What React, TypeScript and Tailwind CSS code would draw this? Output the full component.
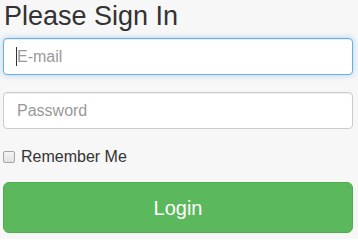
import React, { useState } from 'react';

const App: React.FC = () => {
  const [email, setEmail] = useState('');
  const [password, setPassword] = useState('');
  const [remember, setRemember] = useState(false);

  return (
    <div className="min-h-[239px] w-[358px] bg-[#f7f7f7] font-['Liberation_Sans',Arial,sans-serif] text-[#333]">
      <form className="flex flex-col px-[3px]" onSubmit={(e) => e.preventDefault()}>
        <h3 className="mt-px ml-px text-[27px] leading-[30px] text-[#333]">Please Sign In</h3>

        {/* E-mail (focused) */}
        <div className="relative mt-[7px] w-[350px]">
          <input
            type="email"
            value={email}
            onChange={(e) => setEmail(e.target.value)}
            placeholder="E-mail"
            className="block h-[37px] w-full rounded-[4px] border border-[#66afe9] bg-white pl-[13px] pr-3 text-[16px] text-[#555] placeholder:text-[#999] outline-none shadow-[inset_0_1px_1px_rgba(0,0,0,0.075),0_0_6px_rgba(102,175,233,0.5)]"
          />
          <span className="pointer-events-none absolute left-[13px] top-[9px] h-[19px] w-px bg-[#333]" />
        </div>

        <input
          type="password"
          value={password}
          onChange={(e) => setPassword(e.target.value)}
          placeholder="Password"
          className="mt-[17px] block h-[37px] w-[350px] rounded-[4px] border border-[#ccc] bg-white pl-[13px] pr-3 text-[16px] text-[#555] placeholder:text-[#999] outline-none shadow-[inset_0_1px_1px_rgba(0,0,0,0.075)]"
        />

        <label className="mt-[21px] flex items-center gap-[6px] text-[16px] leading-[13px] text-[#333]">
          <input
            type="checkbox"
            checked={remember}
            onChange={(e) => setRemember(e.target.checked)}
            className="m-0 h-[12px] w-[12px] appearance-none rounded-[2px] border border-[#a6a6a6] bg-gradient-to-b from-[#f4f4f4] to-[#e2e2e2] checked:bg-[#0075ff]"
          />
          Remember Me
        </label>

        <button
          type="submit"
          className="mt-[19px] h-[51px] w-[350px] rounded-[6px] border border-[#4cae4c] bg-[#5cb85c] text-[20px] text-white"
        >
          Login
        </button>
      </form>
    </div>
  );
};

export default App;
